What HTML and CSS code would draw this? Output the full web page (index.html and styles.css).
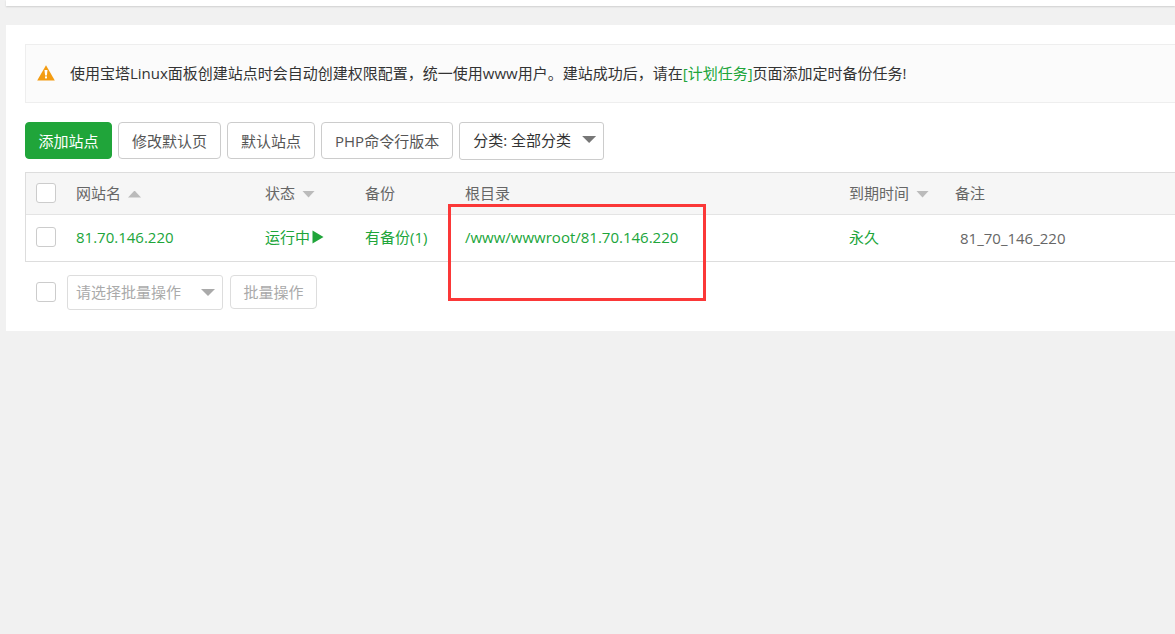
FILE: index.html
```html
<!DOCTYPE html>
<html lang="zh-CN">
<head>
<meta charset="utf-8">
<meta name="viewport" content="width=device-width, initial-scale=1">
<title>网站</title>
<link rel="stylesheet" href="styles.css">
</head>
<body>
<div class="top-card"></div>
<main class="panel">
  <div class="notice">
    <svg class="notice-icon" viewBox="0 0 18 16" aria-hidden="true">
      <path d="M9 0.3 L17.8 15.5 H0.2 Z" fill="#f39c12"/>
      <path d="M7.5 5 H10.5 L9.9 10.4 H8.1 Z" fill="#fff"/>
      <rect x="8" y="11.4" width="2" height="2" fill="#fff"/>
    </svg>
    <p class="notice-text">使用宝塔Linux面板创建站点时会自动创建权限配置，统一使用www用户。建站成功后，请在<a class="link" href="#cron">[计划任务]</a>页面添加定时备份任务!</p>
  </div>

  <div class="toolbar">
    <button class="btn btn-primary" type="button">添加站点</button>
    <button class="btn" type="button">修改默认页</button>
    <button class="btn" type="button">默认站点</button>
    <button class="btn" type="button">PHP命令行版本</button>
    <div class="select-box">
      <select class="select select-category" aria-label="分类">
        <option>分类: 全部分类</option>
      </select>
    </div>
  </div>

  <table class="sites">
    <colgroup>
      <col class="col-check"><col class="col-name"><col class="col-state"><col class="col-backup"><col class="col-root"><col class="col-expire"><col>
    </colgroup>
    <thead>
      <tr>
        <th><input class="check" type="checkbox" aria-label="全选"></th>
        <th>网站名<span class="sort sort-up"></span></th>
        <th>状态<span class="sort"></span></th>
        <th>备份</th>
        <th>根目录</th>
        <th>到期时间<span class="sort"></span></th>
        <th>备注</th>
      </tr>
    </thead>
    <tbody>
      <tr>
        <td><input class="check" type="checkbox" aria-label="选择 81.70.146.220"></td>
        <td><a class="link" href="#site">81.70.146.220</a></td>
        <td><a class="link state" href="#state">运行中<svg class="play" viewBox="0 0 12 14" aria-hidden="true"><path d="M0.5 0.5 L11.5 7 L0.5 13.5 Z" fill="#20a53a"/></svg></a></td>
        <td><a class="link" href="#backup">有备份(1)</a></td>
        <td class="root-cell"><a class="link" href="#root">/www/wwwroot/81.70.146.220</a><span class="highlight"></span></td>
        <td><a class="link" href="#expire">永久</a></td>
        <td class="remark">81_70_146_220</td>
      </tr>
    </tbody>
  </table>

  <div class="batch">
    <input class="check" type="checkbox" aria-label="选择全部站点">
    <div class="select-box select-box-muted">
      <select class="select select-batch" aria-label="批量操作类型">
        <option>请选择批量操作</option>
      </select>
    </div>
    <button class="btn btn-batch" type="button">批量操作</button>
  </div>
</main>
</body>
</html>
```

FILE: styles.css
```css
* {
  box-sizing: border-box;
}

body {
  margin: 0;
  padding-left: 6px;
  background: #f1f1f1;
  color: #666;
  font: 15px/20px "Open Sans", "Noto Sans CJK SC", sans-serif;
}

.top-card {
  height: 6px;
  background: #fff;
  box-shadow: 0 1px 2px rgba(0, 0, 0, 0.14);
}

.panel {
  margin-top: 19px;
  padding: 19px 0 21px 19px;
  background: #fff;
}

.notice {
  display: flex;
  align-items: center;
  gap: 15px;
  min-height: 59px;
  padding: 0 12px 2px 11px;
  border: 1px solid #eee;
  border-right: 0;
  background: #fbfbfb;
  color: #333;
}

.notice-icon {
  flex: none;
  width: 18px;
  height: 16px;
}

.notice-text {
  margin: 0;
}

.link {
  color: #20a53a;
  text-decoration: none;
}

.toolbar {
  display: flex;
  flex-wrap: wrap;
  gap: 6px;
  margin-top: 19px;
}

.btn {
  height: 37px;
  padding: 0 13px;
  border: 1px solid #ccc;
  border-radius: 4px;
  background: #fff;
  color: #555;
  font: inherit;
  white-space: nowrap;
}

.btn-primary {
  min-width: 87px;
  padding: 0 12px;
  border-color: #20a53a;
  background: #20a53a;
  color: #fff;
}

.select-box {
  position: relative;
}

.select-box::after {
  content: "";
  position: absolute;
  top: 14px;
  right: 8px;
  width: 14px;
  height: 7px;
  background: #777;
  clip-path: polygon(0 0, 100% 0, 50% 100%);
  pointer-events: none;
}

.select-box-muted::after {
  background: #aaa;
}

.select {
  display: block;
  border: 1px solid #ccc;
  border-radius: 3px;
  background: #fff;
  font: inherit;
  appearance: none;
}

.select-category {
  width: 145px;
  height: 38px;
  padding: 0 13px 2px;
  color: #333;
}

.select-batch {
  width: 156px;
  height: 35px;
  padding: 0 8px 2px;
  border-color: #ddd;
  color: #aaa;
}

.sites {
  width: 100%;
  margin-top: 12px;
  border: 1px solid #ddd;
  border-right: 0;
  border-spacing: 0;
  table-layout: fixed;
}

.col-check { width: 40px; }
.col-name { width: 189px; }
.col-state { width: 100px; }
.col-backup { width: 100px; }
.col-root { width: 384px; }
.col-expire { width: 106px; }

.sites th,
.sites td {
  padding: 0 10px 2px;
  font-weight: 400;
  text-align: left;
  white-space: nowrap;
}

.sites th {
  height: 42px;
  border-bottom: 1px solid #e4e4e4;
  background: #f6f6f6;
}

.sites td {
  height: 46px;
}

.sites .remark {
  padding: 0 10px 0 15px;
}

.check {
  display: block;
  flex: none;
  width: 20px;
  height: 20px;
  margin: 0;
  border: 1px solid #ccc;
  border-radius: 3px;
  background: #fff;
  appearance: none;
}

.sort {
  display: inline-block;
  width: 13px;
  height: 7px;
  margin-left: 7px;
  background: #bbb;
  clip-path: polygon(0 0, 100% 0, 50% 100%);
  vertical-align: 1px;
}

.sort-up {
  clip-path: polygon(50% 0, 100% 100%, 0 100%);
}

.state {
  display: flex;
  align-items: center;
  gap: 2px;
}

.play {
  width: 12px;
  height: 14px;
}

.root-cell {
  position: relative;
}

.highlight {
  position: absolute;
  top: -11px;
  left: -7px;
  width: 258px;
  height: 97px;
  border: 3px solid #fb3838;
  pointer-events: none;
}

.batch {
  display: flex;
  align-items: flex-start;
  margin-top: 13px;
  padding-left: 11px;
}

.batch .check {
  margin-top: 7px;
}

.batch .select-box {
  margin: 0 7px 0 11px;
}

.btn-batch {
  min-width: 87px;
  height: 34px;
  padding: 0 12px;
  border-color: #ddd;
  color: #aaa;
}
```
